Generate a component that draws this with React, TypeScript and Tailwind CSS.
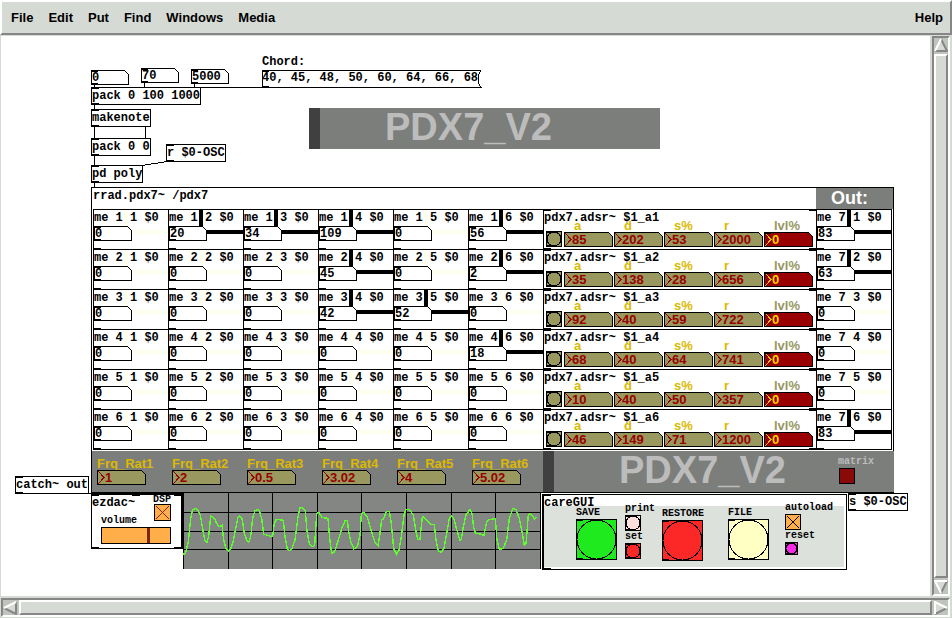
import React from "react";

const MONO = "font-['Liberation_Mono',monospace] font-bold text-[12px] leading-4 text-black whitespace-pre";
const SMALL = "font-['Liberation_Mono',monospace] font-bold text-[10px] leading-3 whitespace-pre";
const SANS = "font-['Liberation_Sans',Arial,sans-serif] font-bold";

const menus = ["File", "Edit", "Put", "Find", "Windows", "Media"];

const matrix: number[][] = [
  [0, 20, 34, 109, 0, 56, 83],
  [0, 0, 0, 45, 0, 2, 63],
  [0, 0, 0, 42, 52, 0, 0],
  [0, 0, 0, 0, 0, 18, 0],
  [0, 0, 0, 0, 0, 0, 0],
  [0, 0, 0, 0, 0, 0, 83],
];

const envelopes: number[][] = [
  [85, 202, 53, 2000, 0],
  [35, 138, 28, 656, 0],
  [92, 40, 59, 722, 0],
  [68, 40, 64, 741, 0],
  [10, 40, 50, 357, 0],
  [46, 149, 71, 1200, 0],
];

const params = ["a", "d", "s%", "r", "lvl%"];
const ratios = ["1", "2", "0.5", "3.02", "4", "5.02"];

const wave =
  "550,343 556,340 565,305 572,235 577,210 586,205 593,209 601,225 607,260 614,300 621,306 626,290 632,228 643,235 650,250 658,260 666,256 671,300 678,327 685,333 692,328 700,303 707,265 713,235 718,227 726,235 733,280 740,300 746,307 752,290 758,235 764,213 772,208 778,213 785,235 791,282 803,286 812,290 818,287 823,250 829,238 850,241 855,290 862,328 868,332 876,325 885,300 894,230 900,204 907,202 916,213 920,265 927,308 936,320 944,315 950,222 956,217 967,233 984,235 990,305 995,340 1004,335 1015,300 1027,260 1036,241 1042,241 1046,275 1053,308 1062,327 1072,320 1080,285 1084,222 1091,217 1102,232 1113,270 1125,308 1134,317 1140,280 1145,240 1150,238 1159,215 1168,215 1174,250 1181,325 1190,343 1197,330 1204,290 1212,225 1218,208 1228,209 1240,225 1248,275 1253,298 1260,298 1267,230 1274,233 1286,247 1294,253 1303,253 1308,300 1315,332 1324,337 1332,325 1340,280 1348,235 1355,227 1362,238 1372,275 1380,302 1384,298 1390,260 1398,225 1410,209 1416,220 1421,262 1426,280 1440,282 1452,286 1460,245 1466,239 1486,236 1491,300 1498,328 1510,325 1520,300 1528,235 1538,205 1548,209 1558,235 1567,280 1573,317 1578,312 1585,225 1591,221 1600,232 1603,238 1610,232";

function Ticks() {
  return (
    <>
      <span className="absolute left-0 top-0 h-px w-[7px] bg-black" />
      <span className="absolute bottom-0 left-0 h-px w-[7px] bg-black" />
    </>
  );
}

function ObjectBox({ className, children }: { className: string; children: React.ReactNode }) {
  return (
    <div className={`absolute h-[18px] border border-black bg-white ${MONO} ${className}`}>
      <Ticks />
      {children}
    </div>
  );
}

function NumberBox({ label, value }: { label: string; value: string | number }) {
  return (
    <div className="relative h-[15px] w-[38px] shrink-0">
      <svg className="absolute inset-0" width="38" height="15" shapeRendering="crispEdges" aria-hidden="true">
        <path d="M.5 .5H33.5L37.5 4.5V14.5H.5Z" fill="white" stroke="black" />
        <path d="M0 1.5H7M0 13.5H7" stroke="black" />
      </svg>
      <input
        aria-label={label}
        defaultValue={value}
        className={`relative block h-[15px] w-full bg-transparent pl-px outline-none ${MONO}`}
      />
    </div>
  );
}

function Number2({ label, value, hot = false }: { label: string; value: string | number; hot?: boolean }) {
  return (
    <div className="relative h-[15px] w-[49px] shrink-0">
      <svg className="absolute inset-0" width="49" height="15" shapeRendering="crispEdges" aria-hidden="true">
        <path d="M.5 .5H44.5L48.5 4.5V14.5H.5Z" fill={hot ? "#990000" : "#98985f"} stroke="black" />
        <path d="M1 1L7 7.5L1 14" fill="none" stroke={hot ? "#e6c000" : "#990000"} />
        {hot && <path d="M0 1.5H7" stroke="black" />}
      </svg>
      <input
        aria-label={label}
        defaultValue={value}
        className={`relative block h-[15px] w-full bg-transparent pl-2 pt-px text-[13px] outline-none ${SANS} ${
          hot ? "text-[#ffd000]" : "text-[#990000]"
        }`}
      />
    </div>
  );
}

function Bang({ label, size, fill }: { label: string; size: number; fill: string }) {
  return (
    <button type="button" aria-label={label} className="block shrink-0">
      <svg className="block" width={size} height={size} shapeRendering="crispEdges" aria-hidden="true">
        <rect x=".5" y=".5" width={size - 1} height={size - 1} fill={fill} stroke="black" />
        <circle cx={size / 2} cy={size / 2} r={size / 2 - 1} fill="none" stroke="black" />
        <path d={`M0 1.5H7M0 ${size - 1.5}H7`} stroke="black" />
      </svg>
    </button>
  );
}

function Toggle({ label, size, fill, cross }: { label: string; size: string; fill: string; cross?: string }) {
  return (
    <span className={`relative block shrink-0 ${size}`}>
      <input
        type="checkbox"
        aria-label={label}
        defaultChecked={Boolean(cross)}
        className={`block size-full appearance-none border border-black ${fill}`}
      />
      {cross && (
        <svg className="pointer-events-none absolute inset-0 size-full" viewBox="0 0 16 16" shapeRendering="crispEdges" aria-hidden="true">
          <path d="M2 2L14 14M14 2L2 14" stroke={cross} />
        </svg>
      )}
    </span>
  );
}

function MatrixCell({ col, row, value }: { col: number; row: number; value: number }) {
  const bar = value > 0 ? "bg-black" : "bg-[#fffff0]";
  return (
    <div className="relative h-10 border-l border-t border-black">
      <span className={`absolute left-[30px] top-0 h-4 w-1 ${bar}`} />
      <div className={`relative h-4 ${MONO}`}>{`me ${col} ${row} $0`}</div>
      <div className="flex items-start">
        <NumberBox label={`Level ${col} ${row}`} value={value} />
        <span className={`mt-1 h-1 flex-1 ${bar}`} />
      </div>
      <span className="absolute bottom-0 left-0 h-px w-[7px] bg-black" />
    </div>
  );
}

function Envelope({ index, values }: { index: number; values: number[] }) {
  return (
    <div className="relative h-10 border-l border-t border-black">
      <span className="absolute left-0 top-0 h-px w-[7px] bg-black" />
      <span className="absolute right-0 top-0 h-px w-[7px] bg-black" />
      <span className="absolute bottom-0 left-0 h-px w-[7px] bg-black" />
      <span className="absolute bottom-0 right-0 h-px w-[7px] bg-black" />
      <div className={`h-4 ${MONO}`}>{`pdx7.adsr~ $1_a${index}`}</div>
      <div className="relative -mt-1.5 flex items-end gap-px pl-0.5">
        <span className="mr-px">
          <Bang label={`Trigger envelope ${index}`} size={16} fill="#98985f" />
        </span>
        {params.map((p, i) => (
          <div key={p}>
            <div className={`pl-2.5 text-[13px] leading-3 ${SANS} ${i === 4 ? "text-[#98985f]" : "text-[#dcb800]"}`}>{p}</div>
            <Number2 label={`${p} of envelope ${index}`} value={values[i]} hot={i === 4} />
          </div>
        ))}
      </div>
    </div>
  );
}

function Banner({ className, children }: { className: string; children?: React.ReactNode }) {
  return (
    <div className={`flex h-[41px] w-[351px] bg-[#7c7e7b] ${className}`}>
      <div className="w-[11px] bg-[#404040]" />
      <div className={`pl-[65px] text-[38px] leading-[38px] text-[#bcbcbc] ${SANS}`}>PDX7_V2</div>
      {children}
    </div>
  );
}

function Rrad() {
  return (
    <section className="absolute left-[90px] top-[151px] w-[803px] border-b border-l border-t border-black bg-white">
      <div className="border-r border-black pb-px pl-px">
        <div className="flex h-[21px] justify-between">
          <div className={MONO}>rrad.pdx7~ /pdx7</div>
          <div className={`w-[77px] bg-[#7c7e7b] pl-[15px] text-[18px] leading-[21px] text-white ${SANS}`}>Out:</div>
        </div>
        <div className="mr-px grid grid-cols-[repeat(6,75px)_273px_75px] border-b border-r border-black">
          {matrix.map((row, r) => (
            <React.Fragment key={r}>
              {row.slice(0, 6).map((v, c) => (
                <MatrixCell key={c} col={r + 1} row={c + 1} value={v} />
              ))}
              <Envelope index={r + 1} values={envelopes[r]} />
              <MatrixCell col={7} row={r + 1} value={row[6]} />
            </React.Fragment>
          ))}
        </div>
      </div>
      <div className="flex bg-[#7c7e7b]">
        <div className="grid w-[451px] grid-cols-[repeat(6,75px)] pl-[5px] pt-[7px]">
          {ratios.map((v, i) => (
            <div key={i}>
              <div className={`text-[13px] leading-3 text-[#dcb800] ${SANS}`}>{`Frq_Rat${i + 1}`}</div>
              <Number2 label={`Frequency ratio ${i + 1}`} value={v} />
            </div>
          ))}
        </div>
        <Banner className="">
          <div className="ml-auto flex w-14 flex-col pt-[5px]">
            <span className={`text-[#bcbcbc] ${SMALL}`}>matrix</span>
            <span className="pl-px">
              <Toggle label="matrix" size="size-4" fill="bg-[#8a0a0a]" />
            </span>
          </div>
        </Banner>
      </div>
    </section>
  );
}

function Ezdac() {
  return (
    <section className="absolute left-[90px] top-[458px] h-[55px] w-[92px] border border-r-2 border-black bg-white">
      <Ticks />
      <span className="absolute left-10 top-0 h-px w-2 bg-black" />
      <span className="absolute right-0 top-0 h-px w-[7px] bg-black" />
      <span className="absolute bottom-0 right-0 h-px w-[7px] bg-black" />
      <div className="flex justify-between">
        <div>
          <div className={MONO}>ezdac~</div>
          <label htmlFor="volume" className={`block pl-[9px] pt-1 ${SMALL}`}>
            volume
          </label>
        </div>
        <div className="w-[27px]">
          <div className={`-ml-px leading-[10px] ${SMALL}`}>DSP</div>
          <div className="-mt-px">
            <Toggle label="DSP" size="size-[17px]" fill="bg-[#ffae4a]" cross="#7a2810" />
          </div>
        </div>
      </div>
      <input
        id="volume"
        type="range"
        min="0"
        max="127"
        defaultValue="88"
        className="absolute left-[9px] top-8 block h-[17px] w-[70px] appearance-none border border-black bg-[#ffae4a] [&::-webkit-slider-thumb]:h-[15px] [&::-webkit-slider-thumb]:w-[3px] [&::-webkit-slider-thumb]:appearance-none [&::-webkit-slider-thumb]:bg-[#7a2810]"
      />
    </section>
  );
}

function Scope() {
  return (
    <svg className="absolute left-[182px] top-[457px]" width="359" height="76" viewBox="183 493 359 76" shapeRendering="crispEdges" role="img" aria-label="Output waveform">
      <rect x="183" y="493" width="358" height="76" fill="#848684" />
      <path
        d="M183.5 493V569M228.5 493V569M272.5 493V569M317.5 493V569M361.5 493V569M406.5 493V569M451.5 493V569M495.5 493V569M540.5 493V569M183 512.5H541M183 531.5H541M183 549.5H541"
        stroke="black"
      />
      <polyline points={wave} transform="translate(0 440) scale(.333333)" fill="none" stroke="#5cff2c" strokeWidth="4.2" />
    </svg>
  );
}

function CareGui() {
  return (
    <section className="absolute left-[541px] top-[458px] h-[76px] w-[305px] border border-l-2 border-black bg-white pb-0.5 pr-0.5">
      <Ticks />
      <div className={`h-[11px] ${MONO}`}>
        <span className="relative">careGUI</span>
      </div>
      <div className="flex h-[61px] items-start bg-[#dde1dc] pl-8">
        <div className="w-[49px] pt-px">
          <div className={SMALL}>SAVE</div>
          <Bang label="SAVE" size={41} fill="#1eea1e" />
        </div>
        <div className="-mt-[3px] w-[37px]">
          <div className={SMALL}>print</div>
          <Bang label="print" size={16} fill="#ffe0dc" />
          <div className={SMALL}>set</div>
          <Bang label="set" size={16} fill="#fc2828" />
        </div>
        <div className="w-[66px] pt-0.5">
          <div className={SMALL}>RESTORE</div>
          <Bang label="RESTORE" size={41} fill="#fc2828" />
        </div>
        <div className="w-[57px] pt-px">
          <div className={SMALL}>FILE</div>
          <Bang label="FILE" size={41} fill="#ffffc4" />
        </div>
        <div className="-mt-1">
          <div className={SMALL}>autoload</div>
          <Toggle label="autoload" size="size-4" fill="bg-[#ffae4a]" cross="#000000" />
          <div className={SMALL}>reset</div>
          <Bang label="reset" size={13} fill="#f828e8" />
        </div>
      </div>
    </section>
  );
}

function Wires() {
  return (
    <svg className="absolute left-0 top-0" width="900" height="540" viewBox="1 36 900 540" shapeRendering="crispEdges" aria-hidden="true">
      <path
        d="M94.5 85V88M144.5 83V88M194.5 84V88M94.5 105V110M94.5 127V138M145.5 127V138M94.5 156V165M94.5 183V188M167 161.5L142 165.5M92 87.5H265M15 493.5H184M892 492.5H848"
        stroke="black"
        fill="none"
      />
    </svg>
  );
}

const arrows = {
  up: { light: "M1 13L7 1", dark: "M7 1L13 13H1" },
  down: { light: "M13 1H1L7 13", dark: "M7 13L13 1" },
  left: { light: "M1 7L13 1", dark: "M13 1V13L1 7" },
  right: { light: "M1 13V1L13 7", dark: "M13 7L1 13" },
};

function Arrow({ dir }: { dir: keyof typeof arrows }) {
  const a = arrows[dir];
  return (
    <button type="button" aria-label={`Scroll ${dir}`} className="block shrink-0">
      <svg className="block" width="14" height="14" aria-hidden="true">
        <path d={a.light + a.dark} fill="#d6dad4" />
        <path d={a.dark} fill="none" stroke="#868686" strokeWidth="2" />
        <path d={a.light} fill="none" stroke="white" strokeWidth="2" />
      </svg>
    </button>
  );
}

const TROUGH = "border-2 border-b-white border-l-[#868686] border-r-white border-t-[#868686] bg-[#bfc4bd] flex";
const THUMB = "flex-1 border-2 border-b-[#868686] border-l-white border-r-[#868686] border-t-white bg-[#d6dad4]";

export default function App() {
  return (
    <div className="flex min-h-screen flex-col bg-[#d6dad4]">
      <nav
        className={`flex h-[35px] items-center gap-[15px] border-2 border-b-[#868686] border-l-white border-r-[#868686] border-t-white pl-[9px] pr-[7px] text-[13px] text-black ${SANS}`}
      >
        {menus.map((m) => (
          <button key={m} type="button">
            {m}
          </button>
        ))}
        <button type="button" className="ml-auto">
          Help
        </button>
      </nav>

      <div className="mt-px flex flex-1 pl-px pr-0.5">
        <main className="relative min-h-[540px] flex-1 overflow-hidden bg-white">
          <div className="absolute left-[90px] top-[34px]">
            <NumberBox label="Note" value={0} />
          </div>
          <div className="absolute left-[140px] top-8">
            <NumberBox label="Velocity" value={70} />
          </div>
          <div className="absolute left-[190px] top-[33px]">
            <NumberBox label="Duration" value={5000} />
          </div>
          <p className={`absolute left-[261px] top-[18px] ${MONO}`}>Chord:</p>
          <div className={`absolute left-[261px] top-[34px] h-[18px] w-[220px] ${MONO}`}>
            <svg className="absolute inset-0" width="220" height="18" shapeRendering="crispEdges" aria-hidden="true">
              <path d="M219 .5H.5V17.5H219L216.5 13.5V4.5L219 .5" fill="white" stroke="black" />
              <path d="M0 1.5H7M0 16.5H7" stroke="black" />
            </svg>
            <button type="button" className="relative block">
              40, 45, 48, 50, 60, 64, 66, 68
            </button>
          </div>
          <ObjectBox className="left-[90px] top-[51px]">pack 0 100 1000</ObjectBox>
          <ObjectBox className="left-[90px] top-[73px]">makenote</ObjectBox>
          <ObjectBox className="left-[90px] top-[102px]">pack 0 0</ObjectBox>
          <ObjectBox className="left-[165px] top-[108px]">r $0-OSC</ObjectBox>
          <ObjectBox className="left-[90px] top-[129px]">pd poly</ObjectBox>
          <Banner className="absolute left-[308px] top-[72px]" />
          <ObjectBox className="left-[14px] top-[440px]">catch~ out</ObjectBox>
          <Rrad />
          <ObjectBox className="left-[847px] top-[457px]">s $0-OSC</ObjectBox>
          <Scope />
          <Ezdac />
          <CareGui />
          <Wires />
        </main>
        <div className={`ml-0.5 w-[18px] flex-col gap-0.5 ${TROUGH}`}>
          <Arrow dir="up" />
          <div className={THUMB} />
          <Arrow dir="down" />
        </div>
      </div>

      <div className={`mb-px ml-px mr-0.5 mt-0.5 h-[19px] items-center gap-0.5 ${TROUGH}`}>
        <Arrow dir="left" />
        <div className={`h-[15px] ${THUMB}`} />
        <Arrow dir="right" />
      </div>
    </div>
  );
}
